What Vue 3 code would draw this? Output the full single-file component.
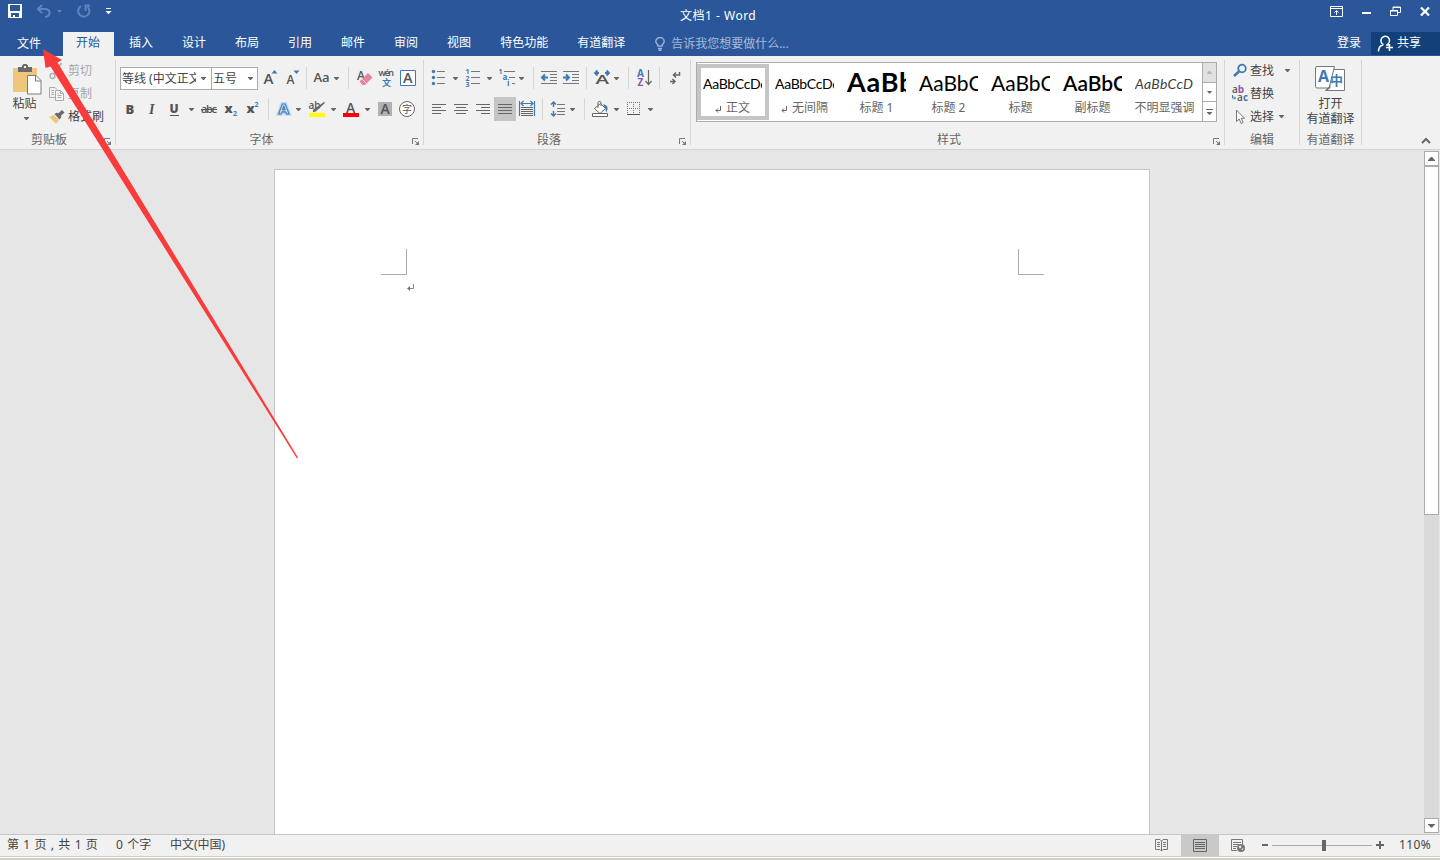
<template>
  <div class="word">
    <header class="title-bar">
      <div class="quick-access">
        <svg class="save" width="14" height="14" viewBox="0 0 14 14">
          <path d="M0 0h14v14H0z" fill="#fff" />
          <path d="M2 1h10v6H2zM3 9h8v4H7v-2H5v2H3z" fill="#2b579a" />
        </svg>
        <svg class="undo" width="16" height="14" viewBox="0 0 16 14">
          <path d="M6 1L2 5l4 4M2 5h7c6 0 6 7 0 8" fill="none" stroke="#5f83bb" stroke-width="2" />
        </svg>
        <i class="caret dim"></i>
        <svg class="redo" width="14" height="14" viewBox="0 0 14 14">
          <path d="M4 2.200A5.600 5.600 0 1 0 10.500 2.800M8.500 7V1.500H13" fill="none" stroke="#5f83bb" stroke-width="2" />
        </svg>
        <svg class="more" width="7" height="7" viewBox="0 0 7 7">
          <path d="M1 0h5v1H1zM.5 3h6L3.500 6.200z" fill="#fff" />
        </svg>
      </div>
      <div class="doc-title">文档1 - Word</div>
      <div class="window-buttons">
        <svg width="13" height="11" viewBox="0 0 13 11">
          <path d="M.5.500h12v10H.500zM0 2.500h13M6.500 9V5M4.500 6.500l2-2 2 2" fill="none" stroke="#fff" />
        </svg>
        <svg width="9" height="11" viewBox="0 0 9 11"><path d="M0 6h9v2H0z" fill="#fff" /></svg>
        <svg width="11" height="11" viewBox="0 0 11 11">
          <path d="M.5 5h7v4.500h-7zM0 4.500h8M3 4V1h7.500v5.500H8M3 1.500h8" fill="none" stroke="#fff" />
        </svg>
        <svg width="10" height="11" viewBox="0 0 10 11">
          <path d="M1 1.500l8 8M9 1.500l-8 8" stroke="#fff" stroke-width="2.300" />
        </svg>
      </div>
    </header>

    <nav class="tabs">
      <span class="tab file">文件</span>
      <span
        v-for="tab in tabs"
        :key="tab"
        class="tab"
        :class="{ active: tab === activeTab }"
        @click="activeTab = tab"
      >{{ tab }}</span>
      <span class="tell-me">
        <svg width="10" height="14" viewBox="0 0 10 14">
          <path d="M3 9C3 7 .8 6.500.8 4.500a4.200 4 0 0 1 8.400 0C9.200 6.500 7 7 7 9zM3 11.500h4M3.500 13.200h3" fill="none" stroke="#9fb4d6" stroke-width="1.400" />
        </svg>
        告诉我您想要做什么...
      </span>
      <span class="login">登录</span>
      <span class="share">
        <svg width="17" height="17" viewBox="0 0 17 17">
          <path d="M1.500 16.500c0-4 2-6 4.500-6.500M6.500 9.800a4.300 4.500 0 1 1 4-.3M9 10h3M12.500 9v7M9 12.500h7" fill="none" stroke="#fff" stroke-width="1.500" />
        </svg>
        共享
      </span>
    </nav>

    <section class="ribbon">
      <div class="group clipboard">
        <div class="group-body">
          <div class="paste">
            <svg width="30" height="32" viewBox="0 0 30 32">
              <path d="M0 4h24v24H0z" fill="#eec77c" />
              <path d="M5 8V3h4V1.500L10.500 0h3L15 1.500V3h4v5z" fill="#6a6a6a" />
              <path d="M11 2h2v2h-2z" fill="#f1f1f1" />
              <path d="M14.500 11.500h8.500l5 5v13.500H14.500z" fill="#fff" stroke="#7a7a7a" />
              <path d="M22.500 11.500v5.500H28" fill="none" stroke="#7a7a7a" />
            </svg>
            <span>粘贴</span>
            <i class="caret"></i>
          </div>
          <ul class="side-list clip-list">
            <li class="disabled">
              <svg width="16" height="18" viewBox="0 0 16 18">
                <path d="M12.500 1L5 12M3 2l7.500 10" stroke="#b0b0b0" stroke-width="2" />
                <circle cx="3.500" cy="14" r="2.400" fill="none" stroke="#b0b0b0" stroke-width="1.500" />
                <circle cx="12" cy="14" r="2.400" fill="none" stroke="#b0b0b0" stroke-width="1.500" />
              </svg>
              剪切
            </li>
            <li class="disabled">
              <svg width="16" height="16" viewBox="0 0 16 16">
                <path d="M6 11.500H.5v-10H6l2 2M2.500 4.500H5M2.500 6.500H5M2.500 8.500H5" fill="none" stroke="#aaa" />
                <path d="M6.500 4.500h5l3 3v7h-8zM11.500 4.500v3h3M8.500 9.500h4M8.500 11.500h4M8.500 7.500h1" fill="#f5f5f5" stroke="#aaa" />
              </svg>
              复制
            </li>
            <li>
              <svg width="16" height="16" viewBox="0 0 16 16">
                <path d="M0 8l5-2 5 5-3 4c-1-2-4-4-7-7z" fill="#eec77c" />
                <path d="M5.500 5l2.500-1.500 4.500 4.500-2 2.500zM9 4.500L13 1l2.500 2.500-4 3.800z" fill="#6a6a6a" />
              </svg>
              格式刷
            </li>
          </ul>
        </div>
        <div class="group-label">剪贴板<svg class="launcher" width="8" height="8" viewBox="0 0 8 8"><path d="M.5 6V.500H6M3 3l3 3" fill="none" stroke="#777" /><path d="M7 3v4H3z" fill="#777" /></svg></div>
      </div>

      <div class="group font">
        <div class="group-body rows">
          <div class="row">
            <div class="combo family"><span>等线 (中文正文)</span><i class="caret"></i></div>
            <div class="combo size"><span>五号</span><i class="caret"></i></div>
            <svg width="22" height="24" viewBox="0 0 22 24">
              <text x="5.500" y="18" class="glyph" font-size="15">A</text>
              <path d="M13.500 7.500h6l-3-3.500z" fill="#3f7ab5" />
            </svg>
            <svg width="20" height="24" viewBox="0 0 20 24">
              <text x="6.500" y="18" class="glyph" font-size="12">A</text>
              <path d="M13.500 4.500h6l-3 3.500z" fill="#3f7ab5" />
            </svg>
            <i class="line"></i>
            <svg width="24" height="24" viewBox="0 0 24 24"><text x="6.500" y="16" class="glyph" font-size="13">Aa</text></svg>
            <span class="drop"><i class="caret"></i></span>
            <i class="line"></i>
            <svg width="26" height="24" viewBox="0 0 26 24">
              <text x="8" y="14" class="glyph" font-size="12">A</text>
              <path d="M19 7l4.500 4.500L16 19h-2.500L10.500 15.500z" fill="#e8849a" />
              <path d="M13 13l4.500 4.500" stroke="#f6d5dc" />
            </svg>
            <svg width="22" height="24" viewBox="0 0 22 24">
              <text x="3.500" y="10" class="glyph" font-size="9" textLength="15.500">wén</text>
              <text x="7" y="20" class="blue cjk" font-size="9">文</text>
            </svg>
            <svg width="22" height="24" viewBox="0 0 22 24">
              <path d="M3.500 4.500h15v15h-15z" fill="#fff" stroke="#3f7ab5" />
              <text x="6" y="17" class="glyph" font-size="14.500">A</text>
            </svg>
          </div>
          <div class="row">
            <svg width="21" height="24" viewBox="0 0 21 24"><text x="5.500" y="16.500" class="glyph bold" font-size="13">B</text></svg>
            <svg width="22" height="24" viewBox="0 0 22 24"><text x="8" y="16.500" class="glyph italic" font-size="14">I</text></svg>
            <svg width="23" height="24" viewBox="0 0 23 24">
              <text x="6.500" y="16" class="glyph bold" font-size="12">U</text>
              <path d="M7 18h9v1H7z" fill="#555" />
            </svg>
            <span class="drop"><i class="caret"></i></span>
            <svg width="23" height="24" viewBox="0 0 23 24">
              <text x="4" y="16" class="glyph" font-size="11" textLength="16">abc</text>
              <path d="M4 12.500h16" stroke="#555" />
            </svg>
            <svg width="22" height="24" viewBox="0 0 22 24">
              <text x="4.500" y="16" class="glyph bold" font-size="13">x</text>
              <text x="13" y="19" class="blue" font-size="7">2</text>
            </svg>
            <svg width="20" height="24" viewBox="0 0 20 24">
              <text x="4.500" y="16" class="glyph bold" font-size="13">x</text>
              <text x="12.500" y="10" class="blue" font-size="7">2</text>
            </svg>
            <i class="line"></i>
            <svg width="24" height="24" viewBox="0 0 24 24">
              <text x="9.500" y="17" class="glow" font-size="15">A</text>
              <text x="9.500" y="17" class="outline" font-size="15">A</text>
            </svg>
            <span class="drop"><i class="caret"></i></span>
            <svg width="24" height="24" viewBox="0 0 24 24">
              <text x="4.500" y="12" class="glyph" font-size="10">ab</text>
              <path d="M20.500 5.500l-9 8.500-2 .5.500-2z" fill="#6a6a6a" stroke="#6a6a6a" stroke-width="1.200" />
              <path d="M5 16h16v4H5z" fill="#ff0" />
            </svg>
            <span class="drop"><i class="caret"></i></span>
            <svg width="23" height="24" viewBox="0 0 23 24">
              <text x="7" y="15.500" class="glyph" font-size="14">A</text>
              <path d="M4 16h16v4H4z" fill="red" />
            </svg>
            <span class="drop"><i class="caret"></i></span>
            <svg width="24" height="24" viewBox="0 0 24 24">
              <path d="M5 5h14v14H5z" fill="#b1b1b1" />
              <text x="7.500" y="17" class="glyph" font-size="14">A</text>
            </svg>
            <svg width="22" height="24" viewBox="0 0 22 24">
              <circle cx="10" cy="12" r="7.500" fill="#fff" stroke="#666" />
              <text x="5" y="15.500" class="cjk" font-size="10" fill="#555">字</text>
            </svg>
          </div>
        </div>
        <div class="group-label">字体<svg class="launcher" width="8" height="8" viewBox="0 0 8 8"><path d="M.5 6V.500H6M3 3l3 3" fill="none" stroke="#777" /><path d="M7 3v4H3z" fill="#777" /></svg></div>
      </div>

      <div class="group paragraph">
        <div class="group-body rows">
          <div class="row">
            <svg width="22" height="24" viewBox="0 0 22 24">
              <circle cx="5.500" cy="5.500" r="1.700" fill="#3f7ab5" />
              <circle cx="5.500" cy="11.500" r="1.700" fill="#3f7ab5" />
              <circle cx="5.500" cy="17.500" r="1.700" fill="#3f7ab5" />
              <path d="M9 5.500h8M9 11.500h8M9 17.500h8" stroke="#777" />
            </svg>
            <span class="drop"><i class="caret"></i></span>
            <svg width="23" height="24" viewBox="0 0 23 24">
              <text x="4.500" y="8" class="blue" font-size="7">1</text>
              <text x="4.500" y="14.500" class="blue" font-size="7">2</text>
              <text x="4.500" y="21" class="blue" font-size="7">3</text>
              <path d="M10 5.500h9M10 11.500h9M10 17.500h9" stroke="#777" />
            </svg>
            <span class="drop"><i class="caret"></i></span>
            <svg width="21" height="24" viewBox="0 0 21 24">
              <text x="3.500" y="8" class="blue" font-size="7">1</text>
              <text x="7.500" y="14" class="blue" font-size="8">a</text>
              <text x="12" y="20" class="blue" font-size="8">i</text>
              <path d="M9 5.500h11M14 11.500h6M17 17.500h3" stroke="#777" />
            </svg>
            <span class="drop"><i class="caret"></i></span>
            <i class="line"></i>
            <svg width="26" height="24" viewBox="0 0 26 24">
              <path d="M7 5.500h16M16 8.500h7M16 11.500h7M16 14.500h7M7 17.500h16" stroke="#777" />
              <path d="M14 11.500H8.500M11 8.500l-3 3 3 3" fill="none" stroke="#3f7ab5" stroke-width="2" />
            </svg>
            <svg width="20" height="24" viewBox="0 0 20 24">
              <path d="M3 5.500h16M12 8.500h7M12 11.500h7M12 14.500h7M3 17.500h16" stroke="#777" />
              <path d="M3 11.500h5.500M6 8.500l3 3-3 3" fill="none" stroke="#3f7ab5" stroke-width="2" />
            </svg>
            <i class="line"></i>
            <svg width="24" height="24" viewBox="0 0 24 24">
              <text x="8.500" y="18" class="glyph" font-size="12" textLength="13.500" lengthAdjust="spacingAndGlyphs">A</text>
              <path d="M12 7H8M10.500 4.500L8 7l2.500 2.500M18 7h4M19.500 4.500L22 7l-2.500 2.500" fill="none" stroke="#3f7ab5" stroke-width="1.800" />
            </svg>
            <span class="drop"><i class="caret"></i></span>
            <i class="line"></i>
            <svg width="24" height="24" viewBox="0 0 24 24">
              <text x="8" y="10.500" class="blue" font-size="10">A</text>
              <text x="8.500" y="19.500" class="purple" font-size="10">Z</text>
              <path d="M19.500 4v14M16.500 15l3 3.500 3-3.500" fill="none" stroke="#666" stroke-width="1.200" />
            </svg>
            <i class="line"></i>
            <svg width="26" height="24" viewBox="0 0 26 24">
              <path d="M19.500 6v3H14M16 6.500L13.500 9l2.500 2.500M10 15.500h5M12.500 13l2.500 2.500-2.500 2.500" fill="none" stroke="#666" stroke-width="1.500" />
            </svg>
          </div>
          <div class="row">
            <span v-for="a in aligns" :key="a.name" class="align" :class="{ pressed: a.name === align }" @click="align = a.name">
              <svg width="22" height="24" viewBox="0 0 22 24"><path :d="a.path" stroke="#666" /></svg>
            </span>
            <svg width="20" height="24" viewBox="0 0 20 24">
              <path d="M3.500 4v15M18.500 4v15M5 6.500h12M7.500 4L5 6.500 7.500 9M14.500 4L17 6.500 14.500 9" fill="none" stroke="#3f7ab5" stroke-width="1.200" />
              <path d="M5 10.500h12M5 12.500h12M5 14.500h12M5 16.500h12M5 18.500h12" stroke="#666" />
            </svg>
            <i class="line"></i>
            <svg width="24" height="24" viewBox="0 0 24 24">
              <path d="M10.500 5v5M10.500 14v5M8 7.500L10.500 5 13 7.500M8 16.500l2.500 2.500 2.500-2.500" fill="none" stroke="#3f7ab5" stroke-width="1.500" />
              <path d="M14 7.500h8M14 11.500h8M14 14.500h8M14 17.500h8" stroke="#777" />
            </svg>
            <span class="drop"><i class="caret"></i></span>
            <i class="line"></i>
            <svg width="26" height="24" viewBox="0 0 26 24">
              <path d="M9.500 11.500l6-5 5 5-5.500 5z" fill="#fff" stroke="#666" />
              <path d="M13 11V5.500c0-1.500 3-1.500 3 0V9" fill="none" stroke="#666" />
              <path d="M18 7.500c3 0 5 1.500 4.500 5l-1.500 3c0-3-1-5-3-8z" fill="#3f7ab5" />
              <path d="M7.500 16.500h15v3h-15z" fill="#fff" stroke="#666" />
            </svg>
            <span class="drop"><i class="caret"></i></span>
            <svg width="23" height="24" viewBox="0 0 23 24">
              <path d="M5 5.500h13M5 11.500h13M5.500 5v13M11.500 5v13M17.500 5v13" stroke="#777" stroke-dasharray="1 1" />
              <path d="M5 17.500h13" stroke="#555" />
            </svg>
            <span class="drop"><i class="caret"></i></span>
          </div>
        </div>
        <div class="group-label">段落<svg class="launcher" width="8" height="8" viewBox="0 0 8 8"><path d="M.5 6V.500H6M3 3l3 3" fill="none" stroke="#777" /><path d="M7 3v4H3z" fill="#777" /></svg></div>
      </div>

      <div class="group styles">
        <div class="gallery">
          <div
            v-for="s in styles"
            :key="s.name"
            class="style-item"
            :class="{ selected: s.name === activeStyle }"
            @click="activeStyle = s.name"
          >
            <div class="sample" :class="s.look"><span>{{ s.sample }}</span></div>
            <div class="style-name">
              <svg v-if="s.mark" width="7" height="7" viewBox="0 0 7 7">
                <path d="M5.500 0v4.500H1M3 2.500l-2 2 2 2" fill="none" stroke="#666" />
              </svg>
              {{ s.name }}
            </div>
          </div>
          <div class="gallery-nav">
            <span class="off"><i class="caret up"></i></span>
            <span><i class="caret"></i></span>
            <span class="expand"><i class="bar"></i><i class="caret"></i></span>
          </div>
        </div>
        <div class="group-label">样式<svg class="launcher" width="8" height="8" viewBox="0 0 8 8"><path d="M.5 6V.500H6M3 3l3 3" fill="none" stroke="#777" /><path d="M7 3v4H3z" fill="#777" /></svg></div>
      </div>

      <div class="group editing">
        <ul class="side-list">
          <li>
            <svg width="18" height="16" viewBox="0 0 18 16">
              <circle cx="10" cy="5.500" r="3.800" fill="none" stroke="#3f7ab5" stroke-width="1.800" />
              <path d="M7 8.500l-5 4.500" stroke="#3f7ab5" stroke-width="2.600" />
            </svg>
            查找<i class="caret find-caret"></i>
          </li>
          <li>
            <svg width="18" height="18" viewBox="0 0 18 18">
              <text x="0" y="8" class="glyph" font-size="10">a</text>
              <text x="5.800" y="8" class="purple" font-size="10">b</text>
              <text x="5" y="16" class="glyph" font-size="10">a</text>
              <text x="11" y="16" class="blue" font-size="10">c</text>
              <path d="M.5 10v3h3M2 11.500l1.500 1.500L2 14.500" fill="none" stroke="#3f7ab5" />
            </svg>
            替换
          </li>
          <li>
            <svg width="18" height="16" viewBox="0 0 18 16">
              <path d="M4.500 1v11.500l2.700-2.500 2 4.500 2-1-2-4.200h3.300z" fill="#fff" stroke="#777" />
            </svg>
            选择<i class="caret"></i>
          </li>
        </ul>
        <div class="group-label">编辑</div>
      </div>

      <div class="group youdao">
        <div class="translate">
          <svg width="32" height="26" viewBox="0 0 32 26">
            <path d="M14 3.500h15.500v21H11L15 20z" fill="#fff" stroke="#777" />
            <path d="M2 .5h17.500L14 22H2Q.5 22 .5 20.500V2Q.5.500 2 .500z" fill="#fff" stroke="#777" />
            <path d="M10.500 24.500l4.500-4V22z" fill="#777" stroke="#777" />
            <text x="3" y="16" class="blue" font-size="16">A</text>
            <text x="15" y="19" class="blue cjk" font-size="13">中</text>
          </svg>
          <span>打开</span>
          <span>有道翻译</span>
        </div>
        <div class="group-label">有道翻译</div>
      </div>

      <svg class="collapse" width="10" height="8" viewBox="0 0 10 8">
        <path d="M1 6l4-4 4 4" fill="none" stroke="#666" stroke-width="2" />
      </svg>
    </section>

    <main class="workspace">
      <article class="page">
        <div class="corners"><i class="corner left"></i><i class="corner right"></i></div>
        <svg class="pilcrow" width="8" height="8" viewBox="0 0 8 8">
          <path d="M6.500 0v4.500H1" fill="none" stroke="#888" />
          <path d="M0 4.500L3 2v5z" fill="#777" />
        </svg>
      </article>
      <div class="scrollbar">
        <span class="scroll-btn"><i class="caret up wide"></i></span>
        <span class="thumb"></span>
        <span class="scroll-btn bottom"><i class="caret wide"></i></span>
      </div>
    </main>

    <footer class="status">
      <span class="pages">第 1 页 , 共 1 页</span>
      <span class="words">0 个字</span>
      <span class="lang">中文(中国)</span>
      <div class="views">
        <span class="view">
          <svg width="14" height="13" viewBox="0 0 14 13">
            <path d="M6.500 2L5 .500H.5v10H5L6.500 12 8 10.500h4.500V.500H8L6.500 2v10M2 3.500h3M2 5.500h3M2 7.500h3M8 3.500h3M8 5.500h3M8 7.500h3" fill="none" stroke="#777" />
          </svg>
        </span>
        <span class="view current">
          <svg width="14" height="13" viewBox="0 0 14 13">
            <path d="M.5.500h13v12H.500zM2 3.500h10M2 5.500h10M2 7.500h10M2 9.500h10" fill="none" stroke="#666" />
          </svg>
        </span>
        <span class="view">
          <svg width="14" height="13" viewBox="0 0 14 13">
            <path d="M6 11.500H.5V.500h11V5M2 3.500h8M2 5.500h6M2 7.500h4M2 9.500h3" fill="none" stroke="#777" />
            <circle cx="10" cy="9" r="4" fill="#777" />
            <path d="M7.500 7.500l2-1 1 1.500-1.500 1.500zM10.500 10l2-1-1 2.500z" fill="#f1f1f1" />
          </svg>
        </span>
      </div>
      <div class="zoom">
        <i class="minus"></i>
        <div class="slider"><i class="knob"></i></div>
        <svg width="8" height="8" viewBox="0 0 8 8"><path d="M0 4h8M4 0v8" stroke="#666" stroke-width="2" /></svg>
        <span>{{ zoom }}%</span>
      </div>
    </footer>
    <div class="frame-edge"></div>

    <svg class="pointer" width="260" height="412" viewBox="0 0 260 412">
      <path d="M3 2L22 13 17.500 15.500 258 410.500 257 411.500 10.500 19.500 5.500 21z" fill="#fa3b3b" />
    </svg>
  </div>
</template>

<script setup>
import { ref } from "vue";

const tabs = ["开始", "插入", "设计", "布局", "引用", "邮件", "审阅", "视图", "特色功能", "有道翻译"];
const activeTab = ref("开始");

const aligns = [
  { name: "left", path: "M4 7.500h14M4 10.500h9M4 13.500h14M4 16.500h9" },
  { name: "center", path: "M4 7.500h14M6 10.500h10M4 13.500h14M6 16.500h10" },
  { name: "right", path: "M4 7.500h14M9 10.500h9M4 13.500h14M9 16.500h9" },
  { name: "justify", path: "M4 7.500h14M4 10.500h14M4 13.500h14M4 16.500h14" },
];
const align = ref("justify");

const styles = [
  { name: "正文", sample: "AaBbCcDd", look: "body", mark: true },
  { name: "无间隔", sample: "AaBbCcDd", look: "body", mark: true },
  { name: "标题 1", sample: "AaBb", look: "h1" },
  { name: "标题 2", sample: "AaBbC", look: "h2" },
  { name: "标题", sample: "AaBbC", look: "h2" },
  { name: "副标题", sample: "AaBbC", look: "h2 strong" },
  { name: "不明显强调", sample: "AaBbCcD", look: "subtle" },
];
const activeStyle = ref("正文");

const zoom = ref(110);
</script>

<style>
body {
  margin: 0;
  overflow: hidden;
}
</style>

<style scoped>
.word {
  position: relative;
  display: flex;
  flex-direction: column;
  width: 1440px;
  height: 860px;
  overflow: hidden;
  font-family: "Noto Sans", "Noto Sans CJK SC", sans-serif;
  font-size: 12px;
  line-height: 16px;
  color: #444;
  background: #e6e6e6;
  cursor: default;
}

svg {
  display: block;
  flex: none;
}

ul {
  margin: 0;
  padding: 0;
  list-style: none;
}

.caret {
  display: block;
  flex: none;
  width: 5px;
  height: 3px;
  background: #666;
  clip-path: polygon(0 0, 100% 0, 100% 20%, 60% 100%, 40% 100%, 0 20%);
}

.caret.up {
  transform: rotate(180deg);
}

.caret.wide {
  width: 7px;
  height: 4px;
}

.caret.dim {
  background: #5f83bb;
}

/* title bar */
.title-bar {
  display: flex;
  height: 32px;
  background: #2b579a;
  color: #fff;
}

.quick-access {
  display: flex;
  align-items: center;
  width: 680px;
  height: 22px;
  padding-left: 8px;
  box-sizing: border-box;
}

.undo {
  margin: 0 5px 0 14px;
}

.redo {
  margin: 0 14px 0 15px;
}

.doc-title {
  padding-top: 8px;
  letter-spacing: 0.5px;
  white-space: nowrap;
}

.window-buttons {
  display: flex;
  gap: 19px;
  margin: 6px 10px 0 auto;
}

.tabs {
  display: flex;
  height: 24px;
  background: #2b579a;
  color: #fff;
  line-height: 22px;
}

.tab {
  padding: 0 14.5px;
}

.tab.file {
  width: 63px;
  padding: 1px 0 0 17px;
  box-sizing: border-box;
}

.tab.active {
  margin-right: 0.5px;
  padding: 0 14px 0 13px;
  background: #f1f1f1;
  color: #2b579a;
}

.tell-me {
  display: flex;
  gap: 6px;
  margin-left: 15.5px;
  padding-top: 1px;
  color: #a6b9d8;
}

.tell-me svg {
  margin-top: 4px;
}

.login {
  margin-left: auto;
  margin-right: 10px;
}

.share {
  display: flex;
  gap: 3px;
  width: 69px;
  height: 23px;
  padding-left: 6px;
  box-sizing: border-box;
  background: #124078;
}

.share svg {
  margin-top: 3px;
}

/* ribbon */
.ribbon {
  display: flex;
  height: 93px;
  padding: 4px 0;
  box-sizing: border-box;
  background: #f1f1f1;
  box-shadow: 0 1px #d2d2d2;
  z-index: 1;
}

.group {
  position: relative;
  display: flex;
  flex-direction: column;
  justify-content: space-between;
  border-right: 1px solid #d5d5d5;
}

.group-body {
  display: flex;
}

.group-label {
  position: relative;
  height: 14px;
  line-height: 18px;
  text-align: center;
  color: #666;
}

.launcher {
  position: absolute;
  right: 3px;
  bottom: -1px;
}

.clipboard {
  width: 115px;
}

.clipboard .group-label {
  padding-right: 17px;
}

.paste {
  display: flex;
  flex-direction: column;
  align-items: center;
  width: 49px;
  padding-top: 4px;
}

.paste svg {
  margin-left: 6px;
}

.paste .caret {
  margin: 5px 0 0 4px;
}

.side-list li {
  display: flex;
  align-items: center;
  height: 23px;
}

.side-list svg {
  margin-right: 3px;
}

.side-list .disabled {
  color: #a6a6a6;
}

.clip-list {
  margin-top: -1px;
}

.rows {
  flex-direction: column;
  gap: 7px;
  padding: 6px 4px 0;
}

.row {
  display: flex;
  height: 24px;
}

.line {
  width: 1px;
  height: 22px;
  margin: 1px 0 0 6px;
  background: #d5d5d5;
}

.drop {
  display: flex;
  align-items: center;
  justify-content: center;
  width: 11px;
  padding-top: 1px;
}

.font {
  width: 307px;
}

.font .group-label {
  padding-right: 16px;
}

.combo {
  display: flex;
  align-items: center;
  justify-content: space-between;
  height: 23px;
  margin-top: 1px;
  padding: 0 4px 0 1px;
  box-sizing: border-box;
  border: 1px solid #ababab;
  background: #fff;
}

.combo span {
  overflow: hidden;
  white-space: nowrap;
}

.combo.family {
  width: 92px;
  padding-right: 5px;
}

.combo.family span {
  width: 74px;
}

.combo.size {
  width: 47px;
  margin-left: -1px;
}

.glyph {
  font-family: "Open Sans", sans-serif;
  font-weight: 600;
  fill: #555;
}

.glyph.bold {
  font-weight: 800;
}

.glyph.italic {
  font-family: "Liberation Serif", serif;
  font-style: italic;
}

.blue {
  font-family: "Open Sans", sans-serif;
  font-weight: 700;
  fill: #3f7ab5;
}

.purple {
  font-family: "Open Sans", sans-serif;
  font-weight: 700;
  fill: #8e58b0;
}

.cjk {
  font-family: "Noto Sans CJK SC", sans-serif;
}

.glow {
  font-weight: 700;
  fill: none;
  stroke: #c6dbf1;
  stroke-width: 4;
}

.outline {
  font-weight: 700;
  fill: #fff;
  stroke: #3f7ab5;
  stroke-width: 1.2;
}

.paragraph {
  width: 266px;
}

.paragraph .group-label {
  padding-right: 16px;
}

.align.pressed {
  background: #c5c5c5;
}

.styles {
  width: 533px;
}

.styles .group-label {
  padding-right: 17px;
}

.gallery {
  display: flex;
  width: 521px;
  height: 60px;
  margin: 2px 0 0 5px;
  box-sizing: border-box;
  border: 1px solid #ababab;
  background: #fff;
}

.style-item {
  width: 72px;
  height: 56px;
  margin-top: 1px;
  padding: 4px 7px 4px 6px;
  box-sizing: border-box;
}

.style-item.selected {
  box-shadow: inset 0 0 0 4px #c5c5c5;
}

.sample {
  height: 30px;
  overflow: hidden;
  white-space: nowrap;
  color: #000;
  font-family: Lato, "Noto Sans", sans-serif;
  font-size: 14px;
  letter-spacing: -0.3px;
  line-height: 32px;
}

.sample.h1 {
  font-size: 27px;
  font-weight: 700;
  letter-spacing: 0.8px;
  line-height: 27px;
}

.sample.h2 {
  font-size: 21px;
  letter-spacing: 0;
  line-height: 30px;
}

.sample.strong {
  font-weight: 600;
}

.sample.subtle {
  color: #404040;
  font-style: italic;
  letter-spacing: 0.3px;
}

.style-name {
  display: flex;
  justify-content: center;
  gap: 4px;
  margin: 2px -6px 0;
  line-height: 16px;
  color: #666;
  white-space: nowrap;
}

.style-name svg {
  margin-top: 6px;
}

.gallery-nav {
  display: flex;
  flex-direction: column;
  width: 13px;
  margin-left: auto;
  border-left: 1px solid #ababab;
}

.gallery-nav span {
  display: flex;
  flex: 1;
  flex-direction: column;
  align-items: center;
  justify-content: center;
}

.gallery-nav span + span {
  border-top: 1px solid #ababab;
}

.gallery-nav .off {
  background: #e1e1e1;
}

.gallery-nav .off .caret {
  background: #b5b5b5;
}

.bar {
  width: 7px;
  height: 1px;
  margin-bottom: 2px;
  background: #666;
}

.editing {
  width: 74px;
}

.editing .side-list {
  margin-top: -1px;
  padding-left: 7px;
}

.editing .side-list svg {
  margin-right: 0;
}

.side-list .caret {
  margin: 0 0 0 5px;
}

.side-list .find-caret {
  margin-left: 11px;
}

.youdao {
  width: 61px;
}

.translate {
  display: flex;
  flex-direction: column;
  align-items: center;
  padding-top: 6px;
  line-height: 15px;
}

.translate svg {
  margin-bottom: 4px;
}

.collapse {
  align-self: flex-end;
  margin: 0 9px 0 auto;
}

/* document */
.workspace {
  display: flex;
  flex: 1;
  padding-left: 274px;
  overflow: hidden;
}

.page {
  width: 874px;
  margin-top: 20px;
  border: 1px solid #c6c6c6;
  border-bottom: 0;
  background: #fff;
}

.corners {
  display: flex;
  justify-content: space-between;
  padding: 79px 105px 0 106px;
}

.corner {
  width: 25px;
  height: 25px;
  border-bottom: 1px solid #ababab;
}

.corner.left {
  border-right: 1px solid #ababab;
}

.corner.right {
  border-left: 1px solid #ababab;
}

.pilcrow {
  margin: 9px 0 0 132px;
}

.scrollbar {
  display: flex;
  flex-direction: column;
  width: 15px;
  margin: 2px 1px 1px auto;
  background: #dadada;
}

.scroll-btn {
  display: flex;
  align-items: center;
  justify-content: center;
  height: 15px;
  box-sizing: border-box;
  border: 1px solid #ababab;
  background: #fff;
}

.scroll-btn.bottom {
  margin-top: auto;
}

.thumb {
  height: 349px;
  box-sizing: border-box;
  border: 1px solid #ababab;
  background: #fff;
}

/* status bar */
.status {
  display: flex;
  height: 22px;
  box-sizing: border-box;
  border-top: 1px solid #c6c6c6;
  background: #f1f1f1;
  line-height: 20px;
  white-space: nowrap;
}

.pages {
  width: 109px;
  padding-left: 7px;
  word-spacing: 1.2px;
}

.words {
  width: 54px;
  word-spacing: 1.2px;
}

.views {
  display: flex;
  margin-left: auto;
}

.view {
  display: flex;
  align-items: center;
  justify-content: center;
  width: 38px;
  padding-bottom: 1px;
}

.view.current {
  background: #c9c9c9;
}

.zoom {
  display: flex;
  align-items: center;
  width: 178px;
  margin-left: 5px;
  padding-bottom: 1px;
}

.minus {
  width: 6px;
  height: 2px;
  background: #666;
}

.slider {
  display: flex;
  align-items: center;
  justify-content: center;
  width: 100px;
  height: 11px;
  margin: 0 4px;
  background: linear-gradient(#ababab, #ababab) center / 100% 1px no-repeat;
}

.knob {
  width: 4px;
  height: 11px;
  margin-left: 4px;
  background: #666;
}

.zoom span {
  margin-left: 15px;
  letter-spacing: 0.4px;
}

.frame-edge {
  height: 4px;
  box-sizing: border-box;
  border-top: 1px solid #d0ccc6;
  border-bottom: 2px solid #d4d0c8;
  background: #fff;
}

/* annotation laid over the window */
.pointer {
  position: absolute;
  left: 40px;
  top: 47px;
  z-index: 2;
  pointer-events: none;
}
</style>
